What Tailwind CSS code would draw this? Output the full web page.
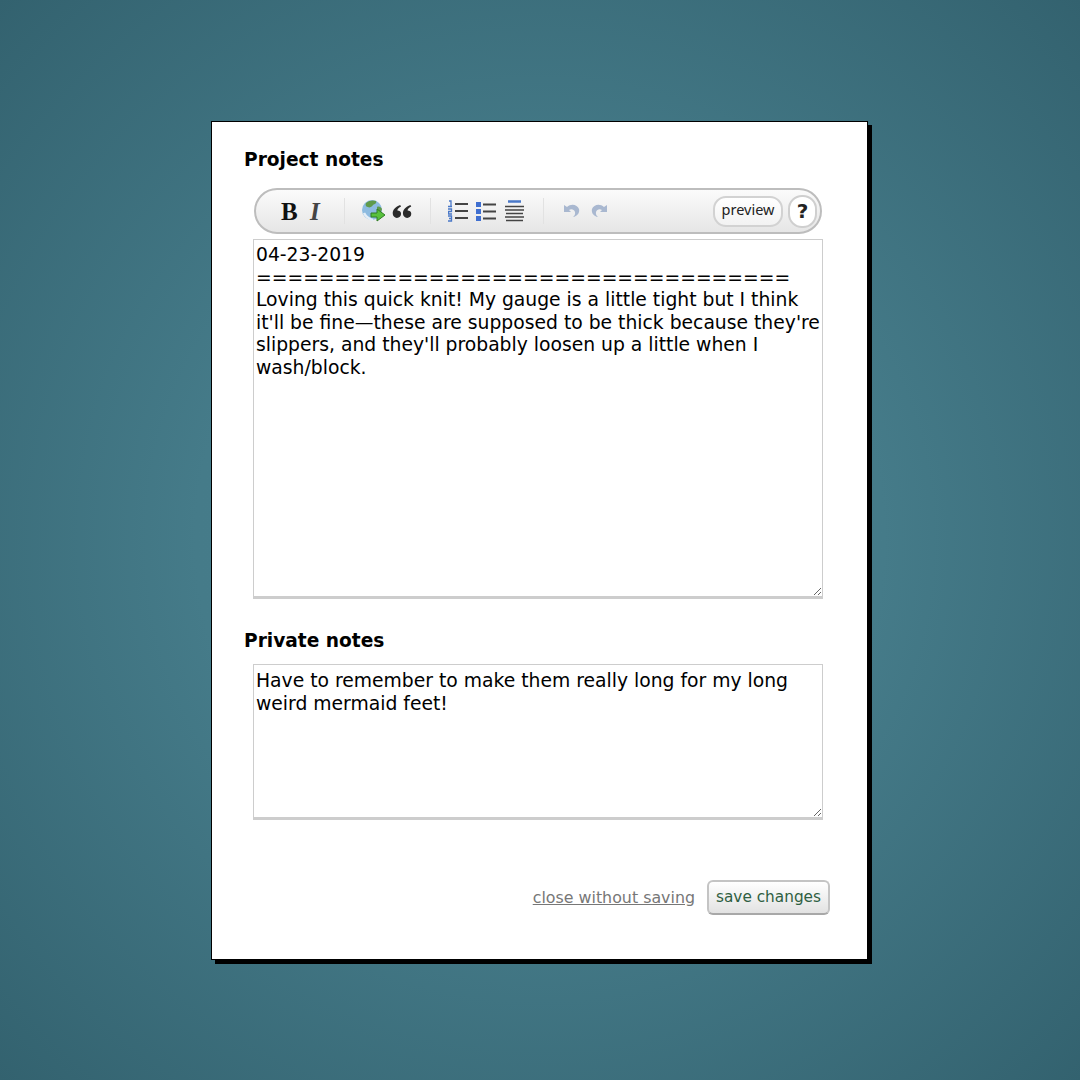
<!DOCTYPE html>
<html lang="en">
<head>
    <meta charset="UTF-8">
    <meta name="viewport" content="width=device-width, initial-scale=1.0">
    <title>Project notes</title>
    <script src="https://cdn.jsdelivr.net/npm/@tailwindcss/browser@4"></script>
</head>
<body class="w-[1080px] h-[1080px] overflow-hidden bg-[radial-gradient(circle_at_center,#47808e_0%,#457b89_45%,#33626f_100%)] font-['DejaVu_Sans',sans-serif]">
    <div class="pt-[121px] pl-[211px]">
        <div class="w-[657px] h-[839px] bg-white border border-black shadow-[4px_4px_0_#000] pl-[32px] pr-[37px]">
            <h2 class="pt-[27px] text-[18.6px] leading-[22px] font-bold text-black">Project notes</h2>

            <!-- toolbar -->
            <div class="mt-[17px] ml-[10px] w-[568px] h-[46px] rounded-[23px] border-2 border-[#bdbdbd] bg-gradient-to-b from-[#fbfbfb] to-[#e6e6e6] flex items-center pl-[25px] pr-[3px]">
                <span class="w-[20px] font-['Liberation_Serif',serif] font-bold text-[25px] leading-none text-[#111]">B</span>
                <span class="ml-[9px] w-[18px] font-['Liberation_Serif',serif] font-bold italic text-[25px] leading-none text-[#444]">I</span>
                <span class="ml-[16px] w-px h-[26px] bg-[#e2e2e2]"></span>

                <svg class="ml-[16px]" width="25" height="25" viewBox="0 0 25 25">
                    <circle cx="11" cy="11" r="10" fill="#8dbbe0"/>
                    <path d="M5 4c3-3 8-3 10-2 1 2-1 3-3 4-1 2-4 3-5 2-2 0-3-2-2-4zM16 8c2-1 4 0 5 2l-1 3-4-1z" fill="#5f9a4a"/>
                    <path d="M3 14c2 4 5 6 9 7" stroke="#e4eef7" stroke-width="2.500" fill="none"/>
                    <path d="M10 14h6v-4l8 6-8 6v-4h-6z" fill="#58c13c" stroke="#2f7d24" stroke-width="1"/>
                </svg>
                <svg class="ml-[6px]" width="20" height="13" viewBox="0 0 20 14">
                    <path d="M8 0C3 2 0 5 0 9c0 3 2 5 4.500 5S9 12 9 9.500 7 6 5 6c0-2 2-3.500 4-4.500zM19 0c-5 2-8 5-8 9 0 3 2 5 4.500 5S20 12 20 9.500 18 6 16 6c0-2 2-3.500 4-4.500z" fill="#2b2b2b"/>
                </svg>
                <span class="ml-[18px] w-px h-[26px] bg-[#e2e2e2]"></span>

                <svg class="ml-[17px]" width="20" height="22" viewBox="0 0 20 22">
                    <path d="M1 1h2v5M0 6.500h4M0 9h3.500v2.500H.5V14h3.500M0 16h3.500v2.500H1h2.500V21H0" stroke="#4a78c8" stroke-width="1.300" fill="none"/>
                    <path d="M7 4h13M7 11h13M7 18h13" stroke="#444" stroke-width="1.800"/>
                </svg>
                <svg class="ml-[8px]" width="20" height="20" viewBox="0 0 20 20">
                    <path d="M0 1h5v5H0zM0 8h5v5H0zM0 15h5v5H0z" fill="#3f6fd0"/>
                    <path d="M7 3.500h13M7 10.500h13M7 17.500h13" stroke="#444" stroke-width="1.800"/>
                </svg>
                <svg class="ml-[9px]" width="19" height="22" viewBox="0 0 19 22">
                    <path d="M3 1.500h13" stroke="#4a78c8" stroke-width="2.500"/>
                    <path d="M0 6.500h19M0 10h19M1 13.500h17M0 17h19M1 20.500h17" stroke="#444" stroke-width="1.700"/>
                </svg>
                <span class="ml-[19px] w-px h-[26px] bg-[#e2e2e2]"></span>

                <svg class="ml-[19px]" width="18" height="16" viewBox="0 0 18 16">
                    <path d="M1 2v7h7L6 7c2-1.500 5-1 6 2 .5 2-.5 4-2 5 4-.5 7-4 6-8C14.500 1.500 8 0 4 4z" fill="#a9b8d0"/>
                </svg>
                <svg class="ml-[9px]" width="18" height="16" viewBox="0 0 18 16">
                    <path d="M17 2v7h-7l2-2c-2-1.500-5-1-6 2-.5 2 .5 4 2 5-4-.5-7-4-6-8C3.500 1.500 10 0 14 4z" fill="#a9b8d0"/>
                </svg>

                <button class="ml-auto w-[70px] h-[31px] pb-[3px] rounded-[13px] border-2 border-[#d2d2d2] bg-gradient-to-b from-white to-[#f2f2f2] text-[14.5px] leading-none text-[#222] font-['Noto_Sans',sans-serif]">preview</button>
                <button class="ml-[5px] w-[29px] h-[33px] rounded-[14px] border-2 border-[#cfcfcf] bg-white text-[20px] leading-none font-bold text-[#222]">?</button>
            </div>

            <textarea readonly class="block mt-[5px] ml-[9px] w-[570px] h-[360px] border border-[#cdcdcd] border-b-[3px] px-[2px] pt-[4px] text-[18.75px] leading-[22.6px] text-black bg-white outline-none">04-23-2019
==================================
Loving this quick knit! My gauge is a little tight but I think it'll be fine—these are supposed to be thick because they're slippers, and they'll probably loosen up a little when I wash/block.</textarea>

            <h2 class="mt-[31px] text-[18.6px] leading-[22px] font-bold text-black">Private notes</h2>

            <textarea readonly class="block mt-[12px] ml-[9px] w-[570px] h-[156px] border border-[#cdcdcd] border-b-[3px] px-[2px] pt-[5px] text-[18.75px] leading-[22.6px] text-black bg-white outline-none">Have to remember to make them really long for my long weird mermaid feet!</textarea>

            <div class="mt-[60px] flex items-center justify-end gap-[12px]">
                <a href="#" class="text-[15.85px] leading-none text-[#777] underline">close without saving</a>
                <button class="w-[123px] h-[35px] rounded-[6px] border-2 border-[#c4c4c4] border-b-[#a8a8a8] bg-gradient-to-b from-white to-[#e2e2e2] text-[15.3px] leading-none text-[#2f5f42] font-medium">save changes</button>
            </div>
        </div>
    </div>
</body>
</html>
